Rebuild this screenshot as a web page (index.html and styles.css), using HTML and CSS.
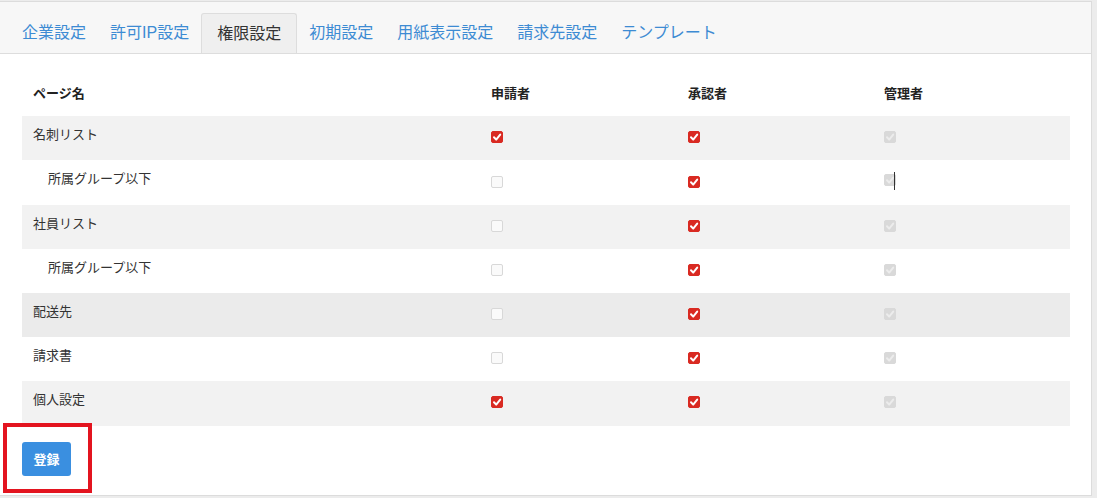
FILE: index.html
```html
<!DOCTYPE html>
<html lang="ja">
<head>
    <meta charset="UTF-8">
    <title>権限設定</title>
    <link rel="stylesheet" href="styles.css">
</head>
<body>
    <div class="panel">
        <ul class="tabs">
            <li><a href="#">企業設定</a></li>
            <li><a href="#">許可IP設定</a></li>
            <li class="active"><a href="#">権限設定</a></li>
            <li><a href="#">初期設定</a></li>
            <li><a href="#">用紙表示設定</a></li>
            <li><a href="#">請求先設定</a></li>
            <li><a href="#">テンプレート</a></li>
        </ul>

        <div class="content">
            <table class="perm-table">
                <colgroup>
                    <col class="col-name">
                    <col class="col-role">
                    <col class="col-role2">
                    <col class="col-role">
                </colgroup>
                <thead>
                    <tr>
                        <th>ページ名</th>
                        <th>申請者</th>
                        <th>承認者</th>
                        <th>管理者</th>
                    </tr>
                </thead>
                <tbody>
                    <tr>
                        <td>名刺リスト</td>
                        <td><span class="cb on"><svg viewBox="0 0 12 12"><path d="M3 6.3 L5.2 8.6 L9.2 3.6"/></svg></span></td>
                        <td><span class="cb on"><svg viewBox="0 0 12 12"><path d="M3 6.3 L5.2 8.6 L9.2 3.6"/></svg></span></td>
                        <td><span class="cb off-lock"><svg viewBox="0 0 12 12"><path d="M3 6.3 L5.2 8.6 L9.2 3.6"/></svg></span></td>
                    </tr>
                    <tr>
                        <td class="sub">所属グループ以下</td>
                        <td><span class="cb"></span></td>
                        <td><span class="cb on"><svg viewBox="0 0 12 12"><path d="M3 6.3 L5.2 8.6 L9.2 3.6"/></svg></span></td>
                        <td class="caret-cell"><span class="cb off-lock"><svg viewBox="0 0 12 12"><path d="M3 6.3 L5.2 8.6 L9.2 3.6"/></svg></span><span class="caret"></span></td>
                    </tr>
                    <tr>
                        <td>社員リスト</td>
                        <td><span class="cb"></span></td>
                        <td><span class="cb on"><svg viewBox="0 0 12 12"><path d="M3 6.3 L5.2 8.6 L9.2 3.6"/></svg></span></td>
                        <td><span class="cb off-lock"><svg viewBox="0 0 12 12"><path d="M3 6.3 L5.2 8.6 L9.2 3.6"/></svg></span></td>
                    </tr>
                    <tr>
                        <td class="sub">所属グループ以下</td>
                        <td><span class="cb"></span></td>
                        <td><span class="cb on"><svg viewBox="0 0 12 12"><path d="M3 6.3 L5.2 8.6 L9.2 3.6"/></svg></span></td>
                        <td><span class="cb off-lock"><svg viewBox="0 0 12 12"><path d="M3 6.3 L5.2 8.6 L9.2 3.6"/></svg></span></td>
                    </tr>
                    <tr class="hover">
                        <td>配送先</td>
                        <td><span class="cb"></span></td>
                        <td><span class="cb on"><svg viewBox="0 0 12 12"><path d="M3 6.3 L5.2 8.6 L9.2 3.6"/></svg></span></td>
                        <td><span class="cb off-lock"><svg viewBox="0 0 12 12"><path d="M3 6.3 L5.2 8.6 L9.2 3.6"/></svg></span></td>
                    </tr>
                    <tr>
                        <td>請求書</td>
                        <td><span class="cb"></span></td>
                        <td><span class="cb on"><svg viewBox="0 0 12 12"><path d="M3 6.3 L5.2 8.6 L9.2 3.6"/></svg></span></td>
                        <td><span class="cb off-lock"><svg viewBox="0 0 12 12"><path d="M3 6.3 L5.2 8.6 L9.2 3.6"/></svg></span></td>
                    </tr>
                    <tr>
                        <td>個人設定</td>
                        <td><span class="cb on"><svg viewBox="0 0 12 12"><path d="M3 6.3 L5.2 8.6 L9.2 3.6"/></svg></span></td>
                        <td><span class="cb on"><svg viewBox="0 0 12 12"><path d="M3 6.3 L5.2 8.6 L9.2 3.6"/></svg></span></td>
                        <td><span class="cb off-lock"><svg viewBox="0 0 12 12"><path d="M3 6.3 L5.2 8.6 L9.2 3.6"/></svg></span></td>
                    </tr>
                </tbody>
            </table>

            <div class="actions">
                <button class="btn-submit" type="button">登録</button>
            </div>
        </div>
    </div>

    <!-- 注目枠（スクショ上の赤枠） -->
    <div class="highlight"></div>
</body>
</html>
```

FILE: styles.css
```css
* {
    margin: 0;
    padding: 0;
    box-sizing: border-box;
}
body {
    background: #ececec;
    font-family: "Liberation Sans", "Noto Sans CJK JP", sans-serif;
    color: #333;
    padding-top: 1px;
    position: relative;
    height: 498px;
    overflow: hidden;
}
.panel {
    width: 1092px;
    background: #fff;
    border: 1px solid #dcdcdc;
    border-left: none;
    height: 495px;
}

/* タブ */
.tabs {
    list-style: none;
    display: flex;
    align-items: flex-end;
    height: 52px;
    padding: 0 10px;
    background: #f7f7f7;
    border-bottom: 1px solid #dddddd;
}
.tabs li a {
    display: block;
    padding: 0 12px;
    height: 40px;
    line-height: 39px;
    font-size: 16px;
    color: #3d8bd3;
    text-decoration: none;
}
.tabs li.active a {
    padding: 0 15px;
    color: #333;
    background: #efefef;
    border: 1px solid #dddddd;
    border-bottom: none;
    border-radius: 3px 3px 0 0;
}

/* テーブル */
.content {
    padding: 18px 21px 0 22px;
}
.perm-table {
    width: 1048px;
    table-layout: fixed;
    border-collapse: collapse;
    font-size: 13px;
}
.col-name { width: 458px; }
.col-role { width: 197px; }
.col-role2 { width: 196px; }
.perm-table th,
.perm-table td {
    height: 44.2px;
    padding: 0 11px 2px;
    text-align: left;
    vertical-align: middle;
}
.perm-table th {
    font-weight: bold;
    color: #222;
    padding-bottom: 4px;
}
.perm-table td:first-child {
    padding-bottom: 9px;
}
.perm-table tbody tr:nth-child(odd) {
    background: #f2f2f2;
}
.perm-table tbody tr.hover {
    background: #ebebeb;
}
.perm-table td.sub {
    padding-left: 26px;
}

/* チェックボックス */
.cb {
    display: inline-block;
    width: 12px;
    height: 12px;
    border-radius: 2px;
    border: 1px solid #d8d8d8;
    background: #fafafa;
    vertical-align: middle;
    margin-top: -2px;
}
.cb svg {
    display: block;
    width: 12px;
    height: 12px;
    margin: -1px;
}
.cb path {
    fill: none;
    stroke: #fff;
    stroke-width: 2;
    stroke-linecap: round;
    stroke-linejoin: round;
}
.cb.on {
    background: #d92a22;
    border-color: #d92a22;
}
.cb.off-lock {
    background: #d9d9d9;
    border-color: #d9d9d9;
}
.cb.off-lock path {
    stroke: #ececec;
}
.caret-cell .caret {
    display: inline-block;
    width: 1px;
    height: 18px;
    background: #333;
    vertical-align: middle;
    margin-left: -2px;
}

/* ボタン */
.actions {
    padding-top: 16px;
}
.btn-submit {
    width: 49px;
    height: 34px;
    border: none;
    border-radius: 3px;
    background: #3a8fe0;
    color: #fff;
    font-family: "Liberation Sans", "Noto Sans CJK JP", sans-serif;
    font-size: 13px;
    font-weight: bold;
}

.highlight {
    position: absolute;
    left: 3px;
    top: 423px;
    width: 89px;
    height: 70px;
    border: 4px solid #e3141f;
}
```
